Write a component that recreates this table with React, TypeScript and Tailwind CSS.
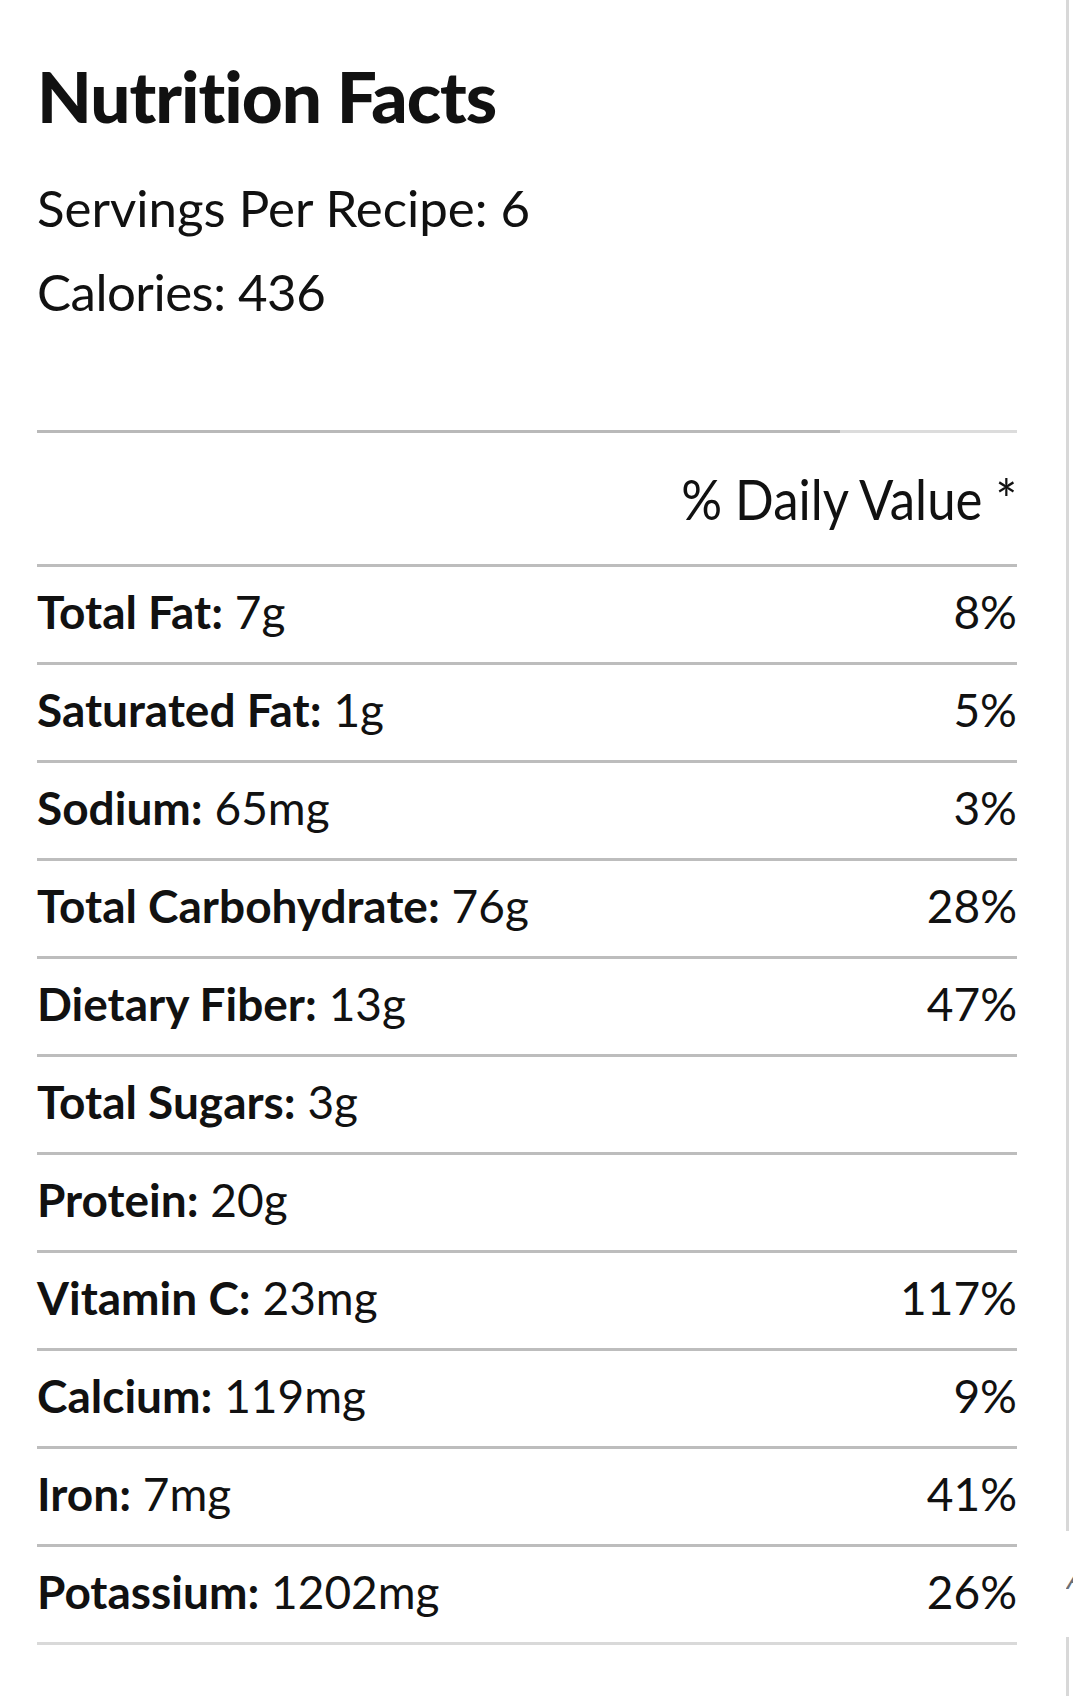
import React from "react";

const rows = [
  { label: "Total Fat:", amount: "7g", pct: "8%" },
  { label: "Saturated Fat:", amount: "1g", pct: "5%" },
  { label: "Sodium:", amount: "65mg", pct: "3%" },
  { label: "Total Carbohydrate:", amount: "76g", pct: "28%" },
  { label: "Dietary Fiber:", amount: "13g", pct: "47%" },
  { label: "Total Sugars:", amount: "3g", pct: "" },
  { label: "Protein:", amount: "20g", pct: "" },
  { label: "Vitamin C:", amount: "23mg", pct: "117%" },
  { label: "Calcium:", amount: "119mg", pct: "9%" },
  { label: "Iron:", amount: "7mg", pct: "41%" },
  { label: "Potassium:", amount: "1202mg", pct: "26%" },
];

export default function App() {
  return (
    <div className="flex w-[1073px] h-[1696px] bg-white text-[#111111] font-['Lato',sans-serif] overflow-hidden">
      <main className="w-[1066px] pl-[37px]">
        <div className="w-[980px]">
          <h1 className="pt-[56px] text-[71px] leading-[80px] font-black tracking-[-1px]">Nutrition Facts</h1>
          <p className="mt-[30px] text-[51px] leading-[84px]">Servings Per Recipe: 6</p>
          <p className="text-[51px] leading-[84px] tracking-[-0.5px]">Calories: 436</p>

          {/* top divider, partly filled */}
          <div className="mt-[96px] flex h-[3px]">
            <div className="w-[803px] bg-[#b9b9b9]" />
            <div className="flex-1 bg-[#dcdcdc]" />
          </div>

          <div className="flex h-[131px] items-center justify-end">
            <span className="text-[56px] origin-right scale-x-[0.91]">% Daily Value *</span>
          </div>

          <div className="flex flex-col">
            {rows.map((r) => (
              <div
                key={r.label}
                className="flex h-[98px] items-center justify-between border-t-[3px] border-[#bdbdbd] pb-[6px] text-[46px]"
              >
                <span>
                  <b className="font-bold">{r.label}</b> {r.amount}
                </span>
                <span>{r.pct}</span>
              </div>
            ))}
            <div className="h-[3px] bg-[#d9d9d9]" />
          </div>
        </div>
      </main>

      {/* edge of the next panel */}
      <aside className="flex w-[7px] flex-col overflow-hidden">
        <div className="h-[1531px] w-[3px] bg-[#d8d8d8]" />
        <div className="flex h-[106px] items-center pb-[8px] pl-[1px] text-[28px] text-[#6b6f75] font-['Liberation_Sans',sans-serif] italic">
          A
        </div>
        <div className="w-[3px] flex-1 bg-[#d8d8d8]" />
      </aside>
    </div>
  );
}
